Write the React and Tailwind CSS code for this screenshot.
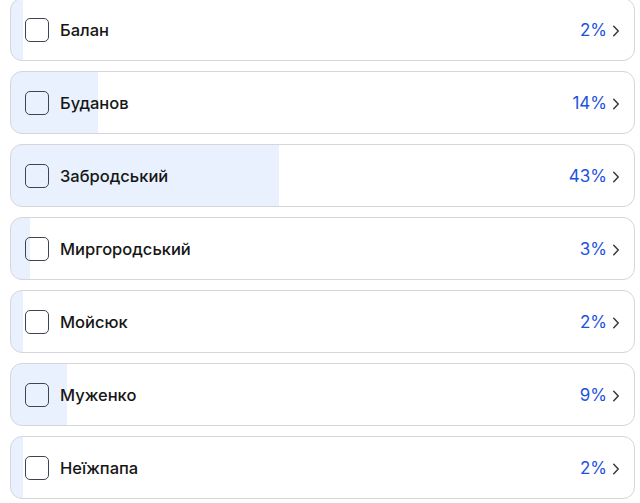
import React from 'react';

const candidates = [
  { name: 'Балан', pct: 2 },
  { name: 'Буданов', pct: 14 },
  { name: 'Забродський', pct: 43 },
  { name: 'Миргородський', pct: 3 },
  { name: 'Мойсюк', pct: 2 },
  { name: 'Муженко', pct: 9 },
  { name: 'Неїжпапа', pct: 2 },
];

const Chevron = () => (
  <svg width="8" height="12" viewBox="0 0 8 12" fill="none" className="shrink-0">
    <path d="M1.75 1.25L6.25 6L1.75 10.75" stroke="#3a3a3f" strokeWidth="1.5" strokeLinecap="round" strokeLinejoin="round" />
  </svg>
);

const Row = ({ name, pct }) => (
  <div
    className="h-[63px] rounded-[12px] border border-[#d6d6da] flex items-center pl-[14px] pr-[14px] pt-[2px]"
    style={{ background: `linear-gradient(to right, #e8f1fd ${pct}%, #ffffff ${pct}%)` }}
  >
    <div className="w-[24px] h-[24px] -mt-[2px] rounded-[5px] border-[1.5px] border-[#3f4450] shrink-0" />
    <span className="ml-[11px] text-[16.5px] font-medium text-[#161616] flex-1">{name}</span>
    <span className="text-[17px] text-[#1d52e0]">{pct}%</span>
    <span className="ml-[5px]">
      <Chevron />
    </span>
  </div>
);

export default function App() {
  return (
    <div className="w-[640px] h-[503px] overflow-hidden bg-white" style={{ fontFamily: 'Inter, "Noto Sans", sans-serif' }}>
      <div className="flex flex-col gap-[10px] px-[10px] pr-[5px] -mt-[2px]">
        {candidates.map((c) => (
          <Row key={c.name} {...c} />
        ))}
      </div>
    </div>
  );
}
